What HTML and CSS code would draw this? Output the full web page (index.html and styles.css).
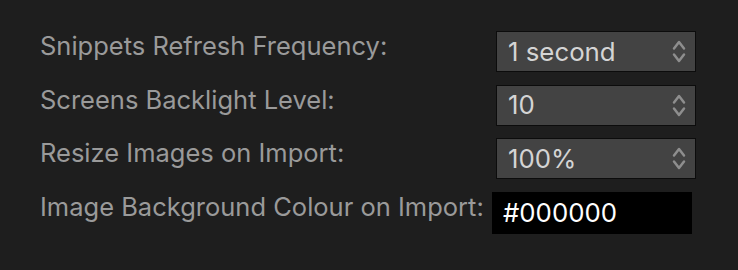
FILE: index.html
```html
<!DOCTYPE html>
<html>
<head>
<meta charset="utf-8">
<link rel="stylesheet" href="styles.css">
</head>
<body>
<div class="prefs">
  <div class="row">
    <div class="label">Snippets Refresh Frequency:</div>
    <div class="select"><span class="value">1 second</span>
      <svg class="chev" viewBox="0 0 14 23" width="14" height="23"><path d="M2 8.5 L7 2 L12 8.5 M2 14.5 L7 21 L12 14.5" fill="none" stroke="#8e8e8e" stroke-width="2.5" stroke-linecap="round" stroke-linejoin="round"/></svg>
    </div>
  </div>
  <div class="row">
    <div class="label">Screens Backlight Level:</div>
    <div class="select"><span class="value">10</span>
      <svg class="chev" viewBox="0 0 14 23" width="14" height="23"><path d="M2 8.5 L7 2 L12 8.5 M2 14.5 L7 21 L12 14.5" fill="none" stroke="#8e8e8e" stroke-width="2.5" stroke-linecap="round" stroke-linejoin="round"/></svg>
    </div>
  </div>
  <div class="row">
    <div class="label">Resize Images on Import:</div>
    <div class="select"><span class="value">100%</span>
      <svg class="chev" viewBox="0 0 14 23" width="14" height="23"><path d="M2 8.5 L7 2 L12 8.5 M2 14.5 L7 21 L12 14.5" fill="none" stroke="#8e8e8e" stroke-width="2.5" stroke-linecap="round" stroke-linejoin="round"/></svg>
    </div>
  </div>
  <div class="row">
    <div class="label label-wide">Image Background Colour on Import:</div>
    <div class="colour"><span class="hex">#000000</span></div>
  </div>
</div>
</body>
</html>
```

FILE: styles.css
```css
html, body {
  margin: 0;
  padding: 0;
  background: #1e1e1e;
  width: 738px;
  height: 270px;
  overflow: hidden;
}

.prefs {
  padding: 31px 0 0 40px;
  font-family: Inter, "Noto Sans", sans-serif;
  font-size: 25.5px;
}

.row {
  display: flex;
  align-items: flex-start;
  height: 53.7px;
}

.label {
  width: 456px;
  color: #9a9a9a;
  line-height: 30px;
  margin-top: 0;
  white-space: nowrap;
}

.label-wide {
  width: 452px;
}

.select {
  box-sizing: border-box;
  width: 200px;
  height: 41px;
  background: #434343;
  border: 1px solid #0c0c0c;
  display: flex;
  align-items: center;
  justify-content: space-between;
  padding: 0 9px 0 11px;
}

.value {
  color: #d4d4d4;
  line-height: 30px;
  font-size: 25.8px;
}

.chev {
  display: block;
}

.colour {
  box-sizing: border-box;
  width: 200px;
  height: 42px;
  background: #000000;
  display: flex;
  align-items: center;
  padding-left: 11px;
}

.hex {
  color: #ffffff;
  line-height: 30px;
  font-size: 25.8px;
}
```
